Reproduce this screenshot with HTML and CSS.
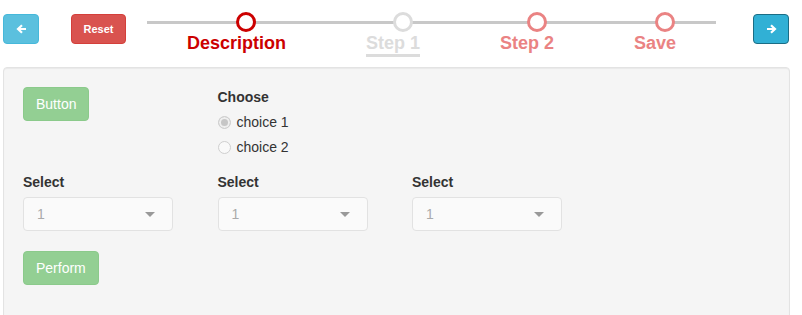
FILE: index.html
```html
<!DOCTYPE html>
<html lang="en">
<head>
  <meta charset="UTF-8">
  <title>Wizard</title>
  <link rel="stylesheet" href="styles.css">
</head>
<body>
  <div class="page">
    <div class="topbar">
      <button class="btn btn-info btn-arrow btn-prev" type="button">
        <svg width="11" height="10" viewBox="0 0 11 10"><path d="M10 5H2.5M6 1.2L2 5l4 3.8" fill="none" stroke="#fff" stroke-width="2.2"/></svg>
      </button>
      <button class="btn btn-danger btn-reset" type="button">Reset</button>
      <div class="steps">
        <div class="step step-done"><span class="dot"></span>Description</div>
        <div class="step step-current"><span class="dot"></span>Step 1</div>
        <div class="step step-todo"><span class="dot"></span>Step 2</div>
        <div class="step step-todo"><span class="dot"></span>Save</div>
      </div>
      <button class="btn btn-info btn-arrow btn-next" type="button">
        <svg width="11" height="10" viewBox="0 0 11 10"><path d="M1 5h7.5M5 1.2L9 5 5 8.8" fill="none" stroke="#fff" stroke-width="2.2"/></svg>
      </button>
    </div>

    <div class="well">
      <div class="row row-top">
        <div class="col">
          <button class="btn btn-success" type="button" disabled>Button</button>
        </div>
        <div class="col">
          <div class="control-label">Choose</div>
          <label class="radio"><input type="radio" name="choice" checked disabled>choice 1</label>
          <label class="radio"><input type="radio" name="choice" disabled>choice 2</label>
        </div>
      </div>

      <div class="row row-selects">
        <div class="col">
          <div class="control-label">Select</div>
          <div class="select"><span>1</span><span class="caret"></span></div>
        </div>
        <div class="col">
          <div class="control-label">Select</div>
          <div class="select"><span>1</span><span class="caret"></span></div>
        </div>
        <div class="col">
          <div class="control-label">Select</div>
          <div class="select"><span>1</span><span class="caret"></span></div>
        </div>
      </div>

      <button class="btn btn-success" type="button" disabled>Perform</button>
    </div>
  </div>
</body>
</html>
```

FILE: styles.css
```css
body { margin: 0; font-family: "Liberation Sans", Arial, sans-serif; font-size: 14px; color: #333; background: #fff; }
.page { width: 787px; margin-left: 3px; }

/* top bar */
.topbar { display: flex; align-items: flex-start; }
.btn { font-family: inherit; border: 1px solid transparent; border-radius: 4px; color: #fff; cursor: pointer; padding: 0; }
.btn-arrow { width: 36px; height: 30px; margin-top: 14px; display: flex; align-items: center; justify-content: center; }
.btn-info { background: #5bc0de; border-color: #46b8da; }
.btn-next { background: #31b0d5; border-color: #1b6d85; margin-left: 37px; }
.btn-danger { background: #d9534f; border-color: #d43f3a; }
.btn-reset { width: 55px; height: 30px; margin: 14px 0 0 32px; font-size: 11px; font-weight: bold; }

.steps { position: relative; width: 569px; margin-left: 21px; padding-top: 33px; display: flex; justify-content: space-around; }
.steps::before { content: ""; position: absolute; left: 0; right: 0; top: 21px; height: 3px; background: #c8c8c8; }
.step { position: relative; font-size: 18px; font-weight: bold; line-height: 20px; padding-bottom: 1px; border-bottom: 3px solid transparent; }
.dot { position: absolute; left: 50%; top: -21px; width: 14px; height: 14px; border: 3px solid; border-radius: 50%; background: #fff; }
.step-done { color: #cc0000; }
.step-current { color: #dcdcdc; border-bottom-color: #dcdcdc; }
.step-todo { color: #ea8383; }

/* panel */
.well { margin-top: 10px; height: 260px; padding: 19px; background: #f5f5f5; border: 1px solid #e3e3e3; border-radius: 4px; box-shadow: inset 0 1px 1px rgba(0, 0, 0, .05); }
.row { display: grid; grid-template-columns: repeat(3, 194.5px); }
.row-top { height: 85px; }
.row-selects { margin-bottom: 20px; }
.btn-success { height: 34px; padding: 0 12px; font-size: 14px; background: #93cf93; border-color: #8bca8b; cursor: not-allowed; }
.control-label { font-weight: bold; line-height: 20px; margin-bottom: 5px; }

.radio { display: flex; align-items: center; height: 20px; margin-bottom: 5px; }
.radio input { appearance: none; width: 13px; height: 13px; margin: 0 6px 0 0; border: 1px solid #cfcfcf; border-radius: 50%; background: #f9f9f9; }
.radio input:checked { background: #c6c6c6; box-shadow: inset 0 0 0 2px #efefef; }

.select { position: relative; box-sizing: border-box; width: 150px; height: 34px; padding: 0 13px; display: flex; align-items: center; justify-content: space-between; background: #fafafa; border: 1px solid #e2e2e2; border-radius: 4px; color: #aaa; }
.caret { width: 0; height: 0; margin-right: 4px; border-style: solid; border-width: 5px 5px 0; border-color: #999 transparent transparent; }
```
